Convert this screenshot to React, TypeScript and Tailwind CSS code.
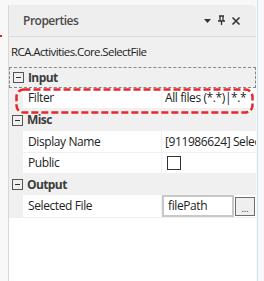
import { useState } from "react";

type Row =
  | { kind: "cat"; label: string; h: number }
  | { kind: "prop"; label: string; h: number; value?: string; type?: "text" | "check" | "file"; highlight?: boolean };

const rows: Row[] = [
  { kind: "cat", label: "Input", h: 21 },
  { kind: "prop", label: "Filter", value: "All files (*.*)|*.*", highlight: true, h: 21 },
  { kind: "cat", label: "Misc", h: 22 },
  { kind: "prop", label: "Display Name", value: "[911986624] SelectFile", h: 22 },
  { kind: "prop", label: "Public", type: "check", h: 21 },
  { kind: "cat", label: "Output", h: 21 },
  { kind: "prop", label: "Selected File", value: "filePath", type: "file", h: 23 },
];

function Minus() {
  return (
    <span className="w-[11px] h-[11px] border border-[#555] flex items-center justify-center">
      <span className="w-[5px] h-px bg-[#333]" />
    </span>
  );
}

export default function App() {
  const [checked, setChecked] = useState(false);

  return (
    <div className="w-[264px] h-[281px] bg-[#f8f8f8] flex relative overflow-hidden tracking-[-0.4px]" style={{ fontFamily: '"Open Sans", "Noto Sans", sans-serif' }}>
      {/* little red mark on left edge */}
      <div className="absolute left-0 top-[35px] w-[2px] h-[2px] bg-[#e02020]" />

      <div className="ml-[8px] mt-[5px] w-[248px] flex flex-col border-l border-[#d8d8d8]">
        {/* title bar */}
        <div className="h-[32px] bg-[#eeeeee] rounded-tr-[4px] border-b border-[#dcdcdc] flex items-center pl-[14px] pr-[15px]">
          <span className="text-[12px] font-semibold tracking-[-0.5px] text-[#4a4a4a] pt-[1px]">Properties</span>
          <div className="ml-auto flex items-center gap-[5px] text-[#333]">
            <svg width="9" height="9" viewBox="0 0 9 9"><path d="M1 3h7L4.5 7z" fill="#333" /></svg>
            <svg width="9" height="11" viewBox="0 0 9 11"><path d="M2 1h5M3 1v5M6 1v5M1 6h7M4.5 6v4" stroke="#333" strokeWidth="1.3" fill="none" /></svg>
            <svg width="10" height="10" viewBox="0 0 10 10"><path d="M1.5 1.5l7 7M8.5 1.5l-7 7" stroke="#333" strokeWidth="1.6" /></svg>
          </div>
        </div>

        {/* object name */}
        <div className="h-[30px] bg-[#f0f0f0] flex items-center pl-[2px] text-[11.5px] tracking-[-0.6px] text-[#222] whitespace-nowrap overflow-hidden">
          RCA.Activities.Core.SelectFile
        </div>

        {/* grid */}
        <div className="flex-1 bg-white flex flex-col text-[12px] text-[#222] relative">
          {rows.map((r, i) =>
            r.kind === "cat" ? (
              <div
                key={i}
                style={{ height: r.h }}
                className={`bg-[#f0f0f0] flex items-center pl-[3px] gap-[4px] ${i === 0 ? "border border-dashed border-[#888]" : ""}`}
              >
                <Minus />
                <span className="font-bold tracking-[-0.6px] text-[#3c3c3c]">{r.label}</span>
              </div>
            ) : (
              <div key={i} style={{ height: r.h }} className="flex border-b border-[#f0f0f0] relative">
                <div className="w-[14px] bg-[#f0f0f0]" />
                <div className="w-[139px] pl-[5px] flex items-center border-r border-[#f0f0f0] whitespace-nowrap">{r.label}</div>
                <div className="flex-1 flex items-center pl-[2px] whitespace-nowrap overflow-hidden">
                  {r.type === "check" ? (
                    <button
                      onClick={() => setChecked(!checked)}
                      className="w-[14px] h-[14px] border border-[#333] bg-white ml-[3px] text-[10px] leading-[12px]"
                    >
                      {checked ? "✓" : null}
                    </button>
                  ) : r.type === "file" ? (
                    <div className="flex items-start h-full -ml-[2px]">
                      <div className="w-[72px] h-[22px] border-2 border-[#c8c8c8] flex items-center pl-[4px] text-[#222]">{r.value}</div>
                      <div className="w-[20px] h-[19px] ml-[1px] mt-[2px] border border-[#6e6e6e] bg-[#efefef] flex items-end justify-center text-[9px] leading-[12px] tracking-normal">...</div>
                    </div>
                  ) : (
                    <span className="pl-[1px]">{r.value}</span>
                  )}
                </div>
                {r.highlight && (
                  <svg className="absolute left-[6px] top-0 pointer-events-none" width="239" height="26" viewBox="0 0 239 26">
                    <rect x="1.5" y="1.5" width="236" height="23" rx="7" fill="none" stroke="#e8262d" strokeWidth="2.5" strokeDasharray="7 3" />
                  </svg>
                )}
              </div>
            )
          )}
          <div className="flex-1 bg-white" />
        </div>
      </div>

      {/* right side scrollbar edge */}
      <div className="ml-[1px] w-[1px] bg-[#cfe6ee]" />
    </div>
  );
}
